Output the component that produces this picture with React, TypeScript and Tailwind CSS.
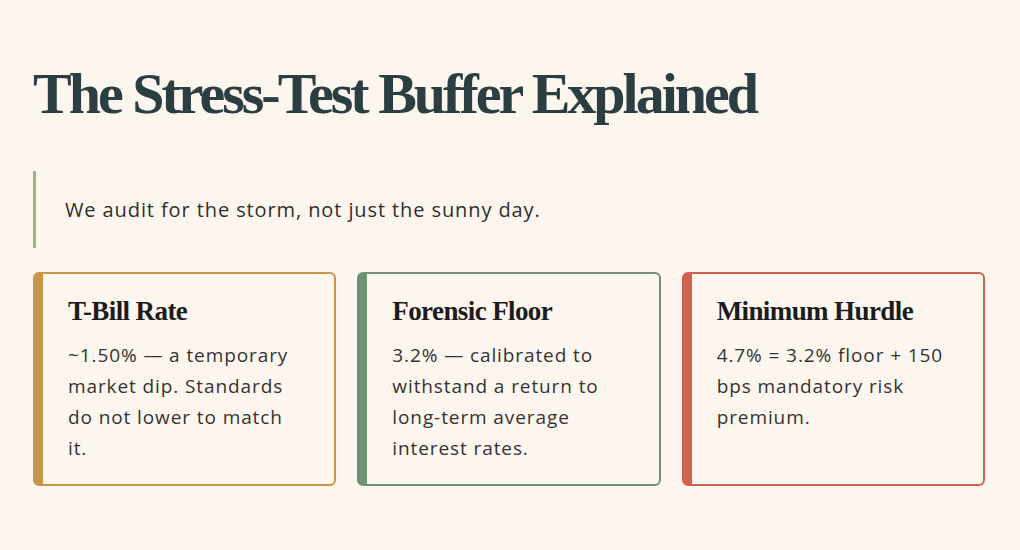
export default function App() {
  const cards = [
    {
      title: 'T-Bill Rate',
      body: '~1.50% — a temporary market dip. Standards do not lower to match it.',
      border: 'border-[#c8964a]',
    },
    {
      title: 'Forensic Floor',
      body: '3.2% — calibrated to withstand a return to long-term average interest rates.',
      border: 'border-[#6f9174]',
    },
    {
      title: 'Minimum Hurdle',
      body: '4.7% = 3.2% floor + 150 bps mandatory risk premium.',
      border: 'border-[#d0634f]',
    },
  ]

  return (
    <div className="w-[1020px] h-[550px] bg-[#fdf6ef] px-[33px] pt-[62px] font-['Open_Sans',sans-serif] text-[#2e2e2e]">
      <h1 className="font-['Liberation_Serif',serif] font-bold text-[58px] leading-[64px] tracking-[-3px] text-[#2b3f42]">
        The Stress-Test Buffer Explained
      </h1>

      <blockquote className="mt-[45px] border-l-[3px] border-[#9db28a] h-[77px] flex items-center pl-[29px]">
        <p className="text-[20px] tracking-[0.9px] text-[#2e2e2e]">We audit for the storm, not just the sunny day.</p>
      </blockquote>

      <div className="mt-[24px] grid grid-cols-3 gap-[21px] w-[952px]">
        {cards.map((c) => (
          <div
            key={c.title}
            className={`h-[214px] rounded-[6px] border-2 border-l-[10px] ${c.border} pl-[25px] pr-[34px] pt-[20px]`}
          >
            <h3 className="font-['Liberation_Serif',serif] font-bold text-[27px] leading-[34px] tracking-[-0.6px] text-[#1c1c1c]">
              {c.title}
            </h3>
            <p className="mt-[12px] text-[19px] leading-[31px] tracking-[0.9px] text-[#333]">{c.body}</p>
          </div>
        ))}
      </div>
    </div>
  )
}
